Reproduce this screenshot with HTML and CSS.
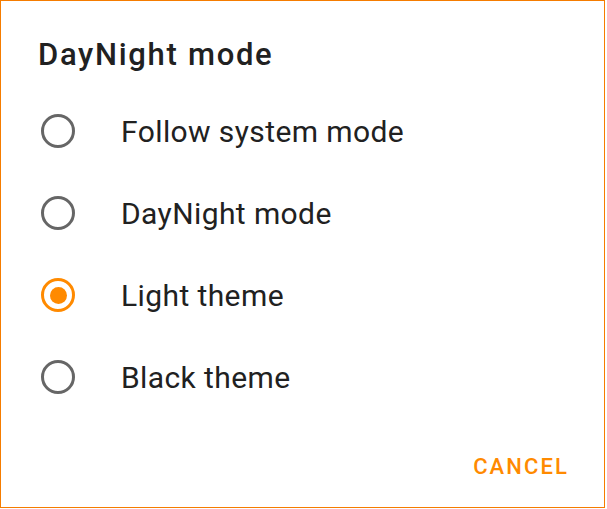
FILE: index.html
```html
<!DOCTYPE html>
<html>
<head>
<meta charset="utf-8">
<link rel="stylesheet" href="styles.css">
</head>
<body>
<div class="dialog">
  <h1 class="title">DayNight mode</h1>
  <ul class="options">
    <li class="option"><span class="radio"></span><span class="label">Follow system mode</span></li>
    <li class="option"><span class="radio"></span><span class="label">DayNight mode</span></li>
    <li class="option"><span class="radio checked"></span><span class="label">Light theme</span></li>
    <li class="option"><span class="radio"></span><span class="label">Black theme</span></li>
  </ul>
  <div class="actions">
    <button class="btn">CANCEL</button>
  </div>
</div>
</body>
</html>
```
FILE: styles.css
```css
html, body {
  margin: 0;
  padding: 0;
  background: #ffffff;
}
.dialog {
  box-sizing: border-box;
  width: 605px;
  height: 508px;
  border: 1.5px solid #f57c00;
  font-family: Roboto, "Liberation Sans", sans-serif;
  display: flex;
  flex-direction: column;
}
.title {
  margin: 0;
  padding: 36px 0 0 37px;
  font-size: 31px;
  font-weight: 500;
  letter-spacing: 1.7px;
  line-height: 36px;
  color: #212121;
}
.options {
  list-style: none;
  margin: 0;
  padding: 17px 0 0 0;
}
.option {
  display: flex;
  align-items: center;
  height: 82px;
  padding-left: 40px;
}
.radio {
  box-sizing: border-box;
  width: 34px;
  height: 34px;
  border: 3.4px solid #666666;
  border-radius: 50%;
  display: flex;
  align-items: center;
  justify-content: center;
  flex: none;
}
.radio.checked {
  border-color: #ff8a00;
}
.radio.checked::after {
  content: "";
  width: 17px;
  height: 17px;
  border-radius: 50%;
  background: #ff8a00;
}
.label {
  margin-left: 46px;
  font-size: 30px;
  letter-spacing: 0.4px;
  color: #212121;
}
.actions {
  display: flex;
  justify-content: flex-end;
  padding: 36px 35px 0 0;
}
.btn {
  background: none;
  border: none;
  padding: 0;
  font-family: Roboto, "Liberation Sans", sans-serif;
  font-size: 22px;
  font-weight: 500;
  letter-spacing: 2.1px;
  color: #ff8a00;
}
```
